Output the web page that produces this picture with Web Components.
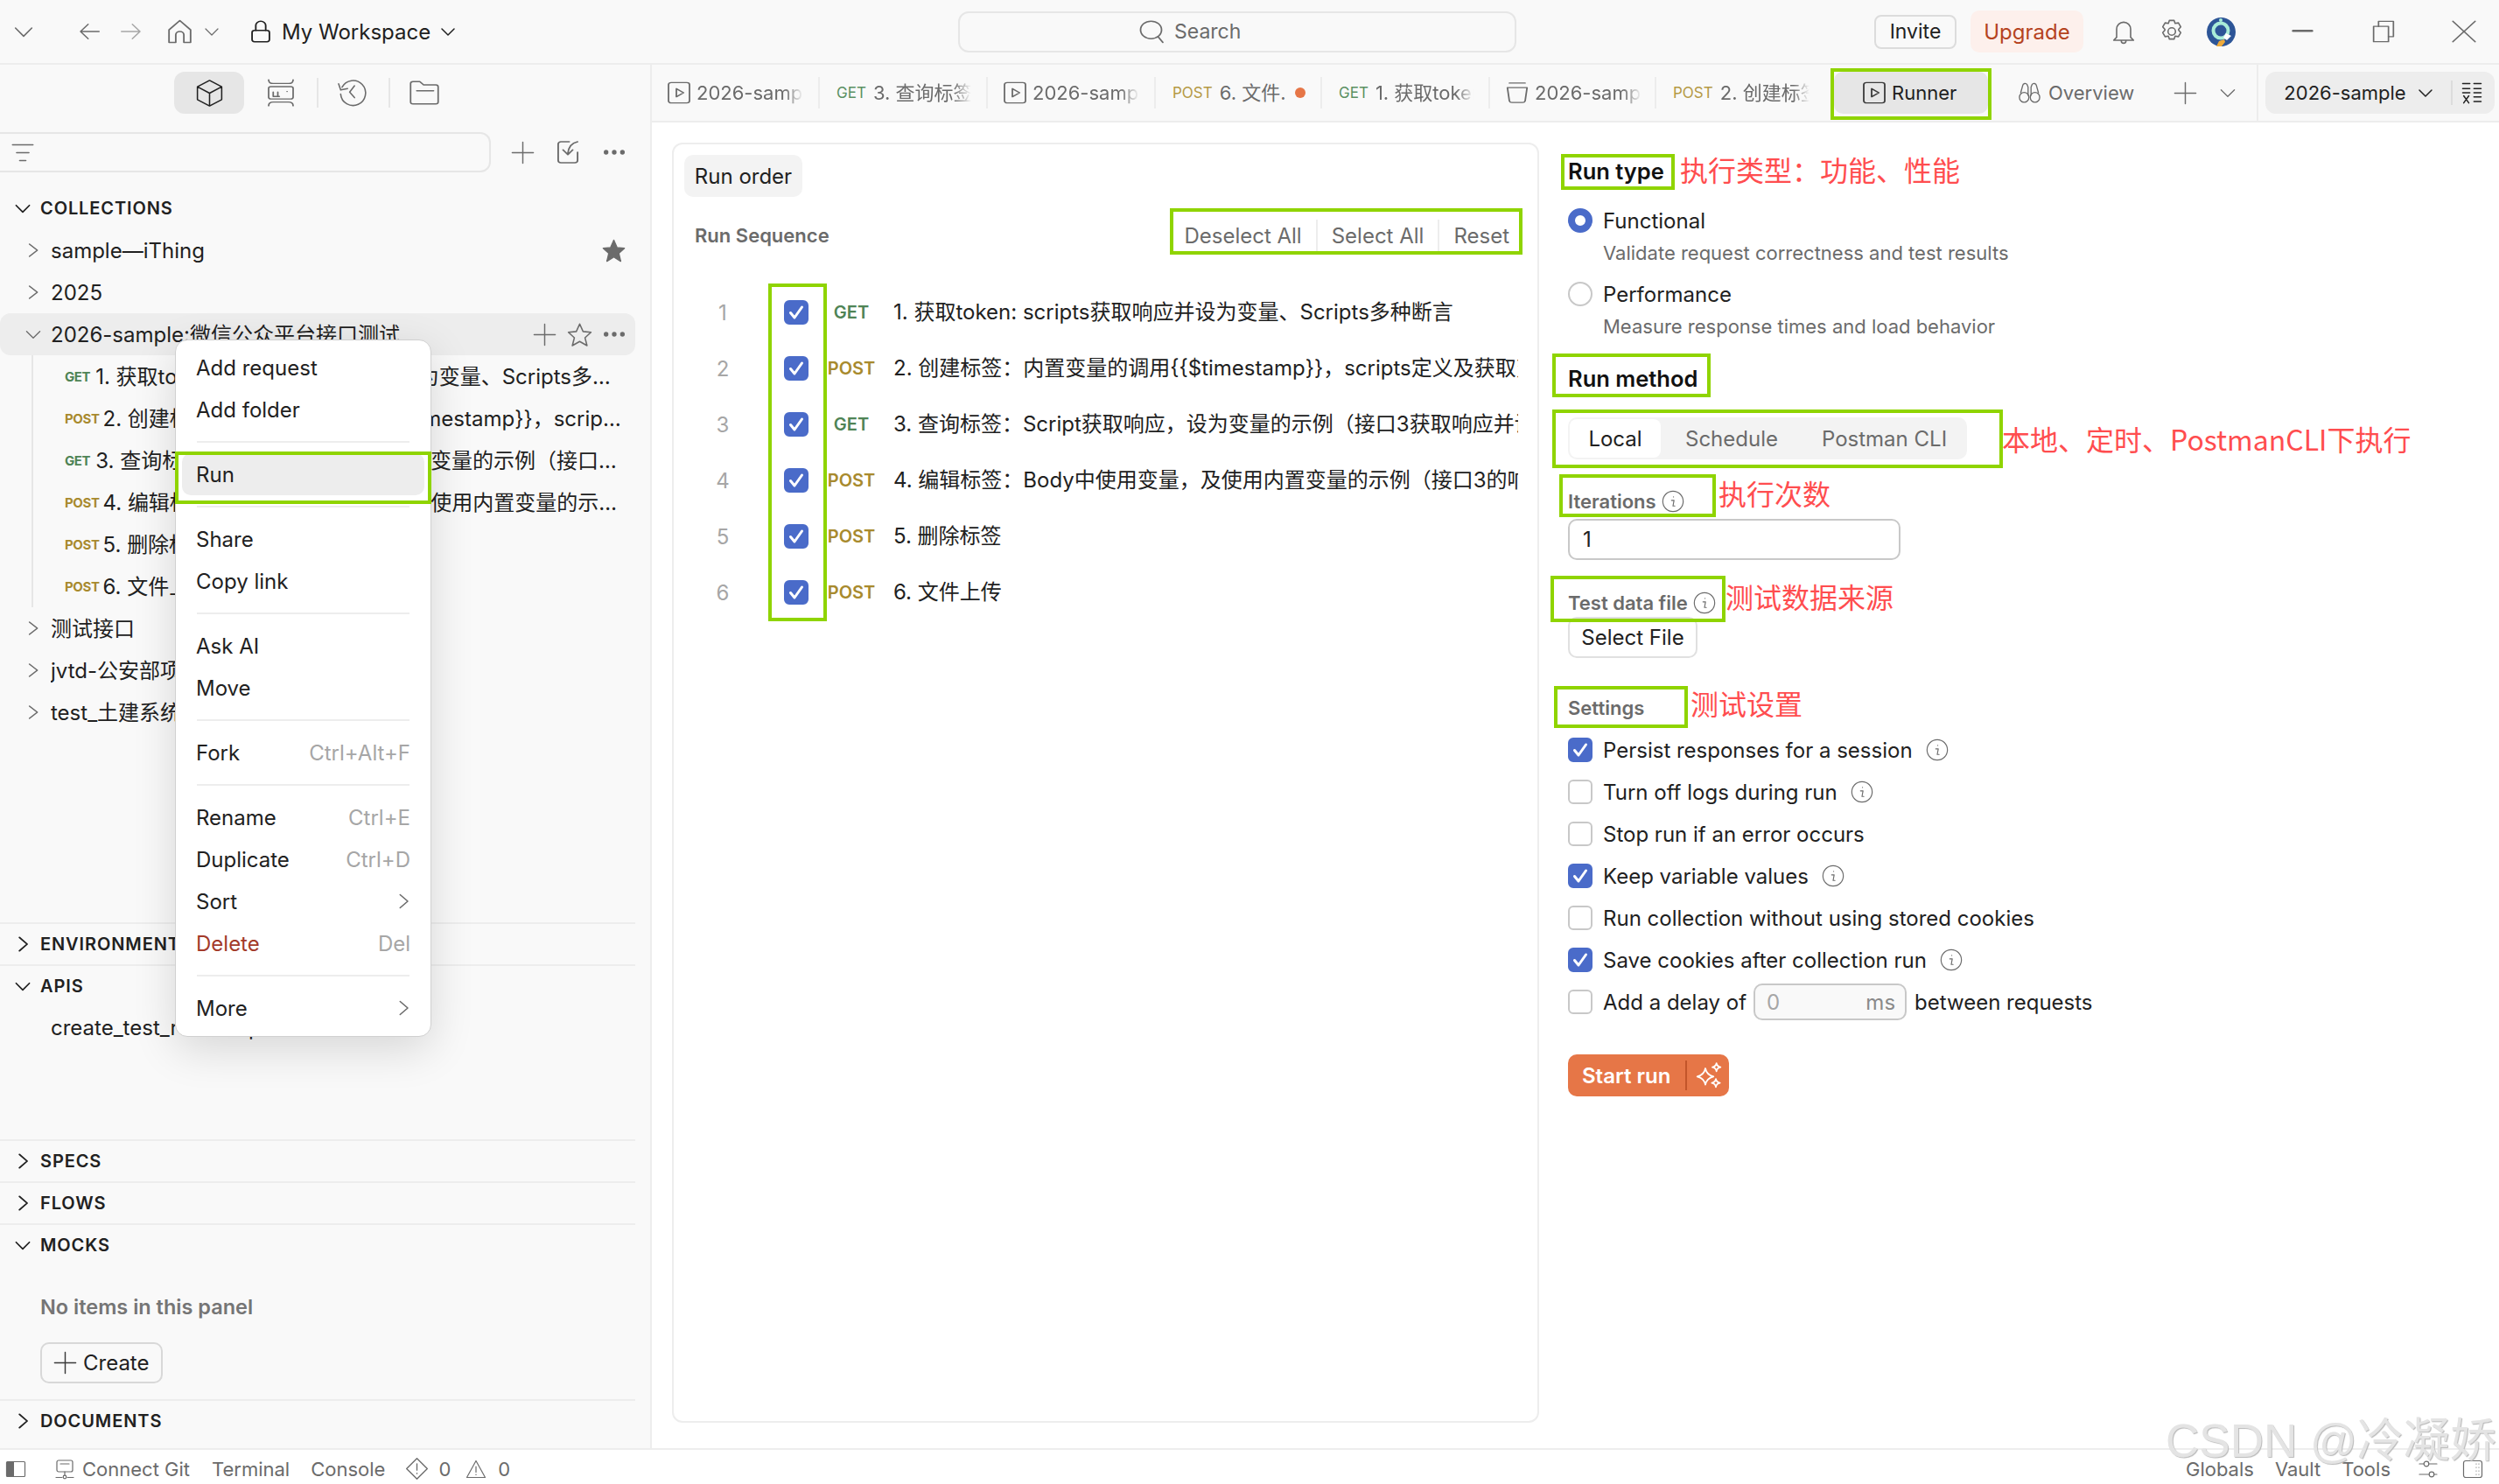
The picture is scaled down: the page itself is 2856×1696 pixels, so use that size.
<!DOCTYPE html>
<html lang="zh">
<head>
<meta charset="utf-8">
<title>Runner</title>
<style>
  html, body { margin: 0; padding: 0; height: 100%; background: #fff; }
  body { font-family: Inter, "Noto Sans CJK SC", sans-serif; font-size: 24px; color: #212121; overflow: hidden; }
</style>
</head>
<body>
<app-root></app-root>
<script>
const ICONS = {
  'chev-down': '<path d="M5 9l7 7 7-7"/>',
  'chev-right': '<path d="M9 5l7 7-7 7"/>',
  'arrow-left': '<path d="M11 5l-7 7 7 7M4 12h17"/>',
  'arrow-right': '<path d="M13 5l7 7-7 7M20 12H3"/>',
  home: '<path d="M4 22V10.500L12 2l8 8.500V22h-5v-7a3 3 0 0 0-6 0v7z"/>',
  lock: '<rect x="5" y="11" width="14" height="11" rx="2"/><path d="M8 11V6a4 4 0 0 1 8 0v5"/>',
  search: '<circle cx="11" cy="10.500" r="8"/><path d="M16.500 17l3.500 5"/>',
  bell: '<path d="M6 17v-7a6 6 0 0 1 12 0v7l2.500 2.500h-17zM10 20a2 2 0 0 0 4 0"/>',
  gear: '<circle cx="12" cy="12" r="3.200"/><path d="M10 2.500h4l.9 2.600 2.800-.5 2 3.400-1.800 2.100 0 .8 1.800 2.100-2 3.400-2.800-.5-.9 2.600h-4l-.9-2.600-2.800.5-2-3.400 1.800-2.100 0-.8-1.800-2.100 2-3.400 2.800.5z"/>',
  minimize: '<path d="M3 11h18" stroke-width="2"/>',
  restore: '<rect x="4" y="7" width="12" height="15"/><path d="M8 7V2h12v15h-4"/>',
  close: '<path d="M4 2l16 20M20 2L4 22"/>',
  cube: '<path d="M12 2l9 5v10l-9 5-9-5V7zM3 7l9 5 9-5M12 12v10"/>',
  apis: '<path d="M4 1.500c0 2 1 3 3 3h10c2 0 3-1 3-3M4 22.500c0-2 1-3 3-3h10c2 0 3 1 3 3"/><rect x="4" y="7" width="16" height="10" rx="1.500"/><path d="M7 11.500V15M10 11.500V15M7 15h4M16 11h.1" stroke-linecap="round"/>',
  history: '<path d="M5 8a9 9 0 1 1-1 5M2.500 5.500L4 10l5-1M14 7l-3.500 4.500 3.500 4"/>',
  folder: '<path d="M3 5a1.500 1.500 0 0 1 1.500-1.500H9l2.500 2.500h8A1.500 1.500 0 0 1 21 7.500V19a1.500 1.500 0 0 1-1.500 1.500h-15A1.500 1.500 0 0 1 3 19zM7 10.500h11"/>',
  filter: '<path d="M2 4h20M6 12h12M9 20h6"/>',
  plus: '<path d="M12 2v20M2 12h20"/>',
  import: '<path d="M13 3H7a2 2 0 0 0-2 2v14a2 2 0 0 0 2 2h10a2 2 0 0 0 2-2v-7M19 3c-4 1-6.500 4-7 10M8.500 10l3.500 4 3.500-4"/>',
  more: '<g fill="currentColor" stroke="none"><circle cx="5" cy="12" r="2"/><circle cx="12" cy="12" r="2"/><circle cx="19" cy="12" r="2"/></g>',
  'star-fill': '<path fill="currentColor" d="M12 2l3 7 7 .7-5.300 4.800L18.500 22 12 18l-6.500 4 1.800-7.500L2 9.700 9 9z"/>',
  star: '<path d="M12 2.500l3 6.700 7 .7-5.300 4.800 1.800 7L12 18l-6.500 3.700 1.800-7L2 9.900l7-.7z"/>',
  runner: '<rect x="4" y="2" width="16" height="20" rx="2"/><path d="M10 8v8l5.500-4z"/>',
  box: '<path d="M6 2.500h12M4.500 7h15L18 20a2 2 0 0 1-2 1.500H8A2 2 0 0 1 6 20z"/>',
  glasses: '<circle cx="6.500" cy="16.500" r="4.800"/><circle cx="17.500" cy="16.500" r="4.800"/><path d="M3 12l2-7a2.500 2.500 0 0 1 4.500-1l1 2.500v8M21 12l-2-7a2.500 2.500 0 0 0-4.500-1l-1 2.500v8"/>',
  vars: '<path d="M3 3h7M14 3h7M3 8h7M14 8h7M3 12h7M14 12h7M14 16h7M14 20.500h7M4 15l5 7M9 15l-5 7"/>',
  info: '<circle cx="12" cy="12" r="10"/><path d="M12.500 7.500v.2M10.500 11H13l-1 5.500h1.800"/>',
  git: '<rect x="3" y="2" width="18" height="13" rx="2"/><path d="M12 15v4M2 21.500h7M15 21.500h7M7 6h10"/><circle cx="12" cy="21" r="1.800"/>',
  'diamond-warn': '<path d="M12 1.500L22.500 12 12 22.500 1.500 12zM12 7v6.500M12 16.500v.5"/>',
  'tri-warn': '<path d="M12 2.500L22.500 21.500h-21zM12 9v6.500M12 18v.5"/>',
  'side-toggle': '<rect x="1.500" y="3.500" width="21" height="17" rx="1"/><rect x="2" y="4" width="8" height="16" fill="currentColor" stroke="none"/>',
  sliders: '<path d="M2 6h5M13 6h9M2 18h11M19 18h3"/><circle cx="10" cy="6" r="2.800"/><circle cx="16" cy="18" r="2.800"/>',
  'side-right': '<rect x="1.500" y="2.500" width="21" height="19" rx="2.500"/><path d="M16 6v.1M19 6v.1M16 10v.1M19 10v.1M16 14v.1M19 14v.1M16 18v.1M19 18v.1" stroke-linecap="round"/>',
  sparkle: '<path d="M9 6c.8 4 2.500 6 7 7-4.500 1-6.200 3-7 7-.8-4-2.500-6-7-7 4.500-1 6.200-3 7-7zM18.500 1.500c.3 2 1.200 3 3.500 3.500-2.300.5-3.200 1.500-3.500 3.500-.3-2-1.200-3-3.500-3.500 2.300-.5 3.200-1.500 3.500-3.500zM18 15c.3 2 1.200 3 3.500 3.500-2.300.5-3.200 1.500-3.500 3.500-.3-2-1.200-3-3.500-3.500 2.300-.5 3.200-1.500 3.500-3.500z"/>'
};

class AppIcon extends HTMLElement {
  connectedCallback() {
    const size = this.getAttribute('size') || 24;
    const h = this.getAttribute('h') || size;
    const sw = this.getAttribute('sw') || 1.200;
    const root = this.shadowRoot || this.attachShadow({ mode: 'open' });
    root.innerHTML = `
      <style>:host { display: inline-flex; flex: none; } svg { display: block; }</style>
      <svg width="${size}" height="${h}" viewBox="0 0 24 24" preserveAspectRatio="none" fill="none" stroke="currentColor"
        stroke-width="${sw}" stroke-linejoin="round" stroke-linecap="round">${ICONS[this.getAttribute('name')] || ''}</svg>`;
  }
}

// simple base so every element only has to give its css and markup
class ShadowEl extends HTMLElement {
  connectedCallback() {
    if (this.shadowRoot) return;
    this.attachShadow({ mode: 'open' }).innerHTML = `<style>${this.css()}</style>${this.html()}`;
  }
  css() { return ':host { display: block; }'; }
  html() { return '<slot></slot>'; }
  attr(name, fallback = '') { return this.hasAttribute(name) ? this.getAttribute(name) : fallback; }
}

class TopBar extends ShadowEl {
  css() {
    return `
      :host { display: flex; align-items: center; height: 72px; border-bottom: 2px solid #ededed; background: #f9f9f9; flex: none; }
      .left { width: 1095px; display: flex; align-items: center; color: #6b6b6b; flex: none; }
      .search { width: 638px; height: 47px; box-sizing: border-box; border: 2px solid #e6e6e6; border-radius: 12px; flex: none;
        display: flex; align-items: center; gap: 7px; padding-left: 202px; color: #6b6b6b; font-size: 23px; }
      .right { display: flex; align-items: center; color: #6b6b6b; }
      .ws { color: #212121; font-size: 24px; margin-left: 7px; }
      .invite { margin-left: 409px; width: 94px; height: 39px; box-sizing: border-box; border: 2px solid #dcdcdc; border-radius: 8px; color: #212121;
        display: flex; align-items: center; justify-content: center; font-size: 23px; }
      .upgrade { margin-left: 16px; width: 129px; height: 48px; border-radius: 10px; background: #fdf0ec; color: #b5431f;
        display: flex; align-items: center; justify-content: center; font-size: 24px; }
    `;
  }
  html() {
    return `
      <div class="left">
        <app-icon name="chev-down" size="32" style="margin-left:11px"></app-icon>
        <app-icon name="arrow-left" size="30" h="28" style="margin-left:44px"></app-icon>
        <app-icon name="arrow-right" size="30" h="28" style="margin-left:18px;color:#a6a6a6"></app-icon>
        <app-icon name="home" size="37" h="30" style="margin-left:22px"></app-icon>
        <app-icon name="chev-down" size="24" style="margin-left:6px"></app-icon>
        <app-icon name="lock" size="34" h="28" sw="1.300" style="margin-left:27px;color:#212121"></app-icon>
        <span class="ws">My Workspace</span>
        <app-icon name="chev-down" size="24" sw="1.500" style="margin-left:8px;color:#212121"></app-icon>
      </div>
      <div class="search"><app-icon name="search" size="36" h="30"></app-icon><span>Search</span></div>
      <div class="right">
        <div class="invite">Invite</div>
        <div class="upgrade">Upgrade</div>
        <app-icon name="bell" size="32" style="margin-left:30px"></app-icon>
        <app-icon name="gear" size="32" style="margin-left:23px"></app-icon>
        <svg width="33" height="33" viewBox="0 0 33 33" style="margin-left:24px">
          <circle cx="16.500" cy="16.500" r="16.500" fill="#2d5597"/>
          <circle cx="16" cy="15" r="8.500" fill="none" stroke="#a9ecd8" stroke-width="4"/>
          <path d="M22 18l6 3-5 5-4-3z" fill="#fff"/><path d="M11 33l3-6 6-2 1 3-4 5z" fill="#eeaa3c"/>
          <circle cx="16" cy="3" r="2" fill="#a9ecd8"/>
        </svg>
        <app-icon name="minimize" size="29" style="margin-left:62px"></app-icon>
        <app-icon name="restore" size="34" h="28" style="margin-left:61px"></app-icon>
        <app-icon name="close" size="38" h="28" style="margin-left:56px"></app-icon>
      </div>`;
  }
}

class ContextMenu extends ShadowEl {
  css() {
    return `
      :host { display: block; position: absolute; left: 200px; top: 314px; width: 293px; box-sizing: border-box; padding: 7px 0 8px;
        background: #fff; border: 1px solid #d0d0d0; border-radius: 14px; box-shadow: 0 14px 50px rgba(0,0,0,.14); font-size: 24px; z-index: 5; }
      .item { height: 48px; margin: 0 7px; padding: 0 16px; display: flex; align-items: center; justify-content: space-between; border-radius: 10px; color: #212121; }
      .item.on { background: #ededed; }
      .item.danger { color: #a33a2a; }
      .item small { font-size: 24px; color: #a6a6a6; }
      .item app-icon { color: #6b6b6b; margin-right: -7px; }
      .sep { height: 26px; display: flex; align-items: center; padding: 0 24px; }
      .sep i { display: block; height: 2px; flex: 1; background: #ededed; }
    `;
  }
  html() {
    const rows = [
      ['Add request'], ['Add folder'], null,
      ['Run', '', 'on'], null,
      ['Share'], ['Copy link'], null,
      ['Ask AI'], ['Move'], null,
      ['Fork', 'Ctrl+Alt+F'], null,
      ['Rename', 'Ctrl+E'], ['Duplicate', 'Ctrl+D'], ['Sort', '>'], ['Delete', 'Del', 'danger'], null,
      ['More', '>']
    ];
    return rows.map(r => {
      if (!r) return '<div class="sep"><i></i></div>';
      const tail = r[1] === '>' ? '<app-icon name="chev-right" size="30" h="26"></app-icon>' : r[1] ? `<small>${r[1]}</small>` : '';
      return `<div class="item ${r[2] || ''}"><span>${r[0]}</span>${tail}</div>`;
    }).join('');
  }
}

class SideSection extends ShadowEl {
  css() {
    return `
      :host { display: flex; align-items: center; height: 48px; box-sizing: border-box; flex: none; margin-right: 17px; }
      :host([line]) { border-top: 2px solid #ededed; }
      .c { width: 46px; padding-left: 6px; box-sizing: border-box; display: flex; justify-content: center; color: #212121; flex: none; }
      span { font-size: 20px; font-weight: 600; letter-spacing: .9px; color: #212121; white-space: nowrap; }
    `;
  }
  html() {
    const icon = this.hasAttribute('open')
      ? '<app-icon name="chev-down" size="26" sw="1.600"></app-icon>'
      : '<app-icon name="chev-right" size="30" h="26" sw="1.600"></app-icon>';
    return `<div class="c">${icon}</div><span><slot></slot></span>`;
  }
}

class TreeRow extends ShadowEl {
  css() {
    return `
      :host { display: flex; align-items: center; height: 48px; flex: none; margin-right: 17px; font-size: 24px; color: #212121; box-sizing: border-box; }
      :host([active]) { background: #ededed; border-radius: 12px; }
      .c { width: 58px; padding-left: 17px; box-sizing: border-box; display: flex; justify-content: center; color: #6b6b6b; flex: none; }
      .name { flex: 1; min-width: 0; white-space: nowrap; overflow: hidden; line-height: 32px; padding-top: 2px; }
      .tools { display: flex; align-items: center; color: #6b6b6b; padding-right: 8px; }
    `;
  }
  html() {
    let chev = '<div class="c"></div>';
    if (!this.hasAttribute('nochev')) {
      chev = this.hasAttribute('open')
        ? '<div class="c"><app-icon name="chev-down" size="26"></app-icon></div>'
        : '<div class="c"><app-icon name="chev-right" size="31" h="24"></app-icon></div>';
    }
    return `${chev}<span class="name"><slot></slot></span><span class="tools"><slot name="tools"></slot></span>`;
  }
}

class ReqRow extends ShadowEl {
  css() {
    return `
      :host { display: flex; align-items: center; height: 48px; margin-left: 36px; margin-right: 28px; padding-left: 36px; border-left: 2px solid #e6e6e6; box-sizing: border-box; font-size: 24px; color: #212121; }
      b { font-size: 15px; font-weight: 700; letter-spacing: -.4px; flex: none; margin-right: 6px; }
      b.GET { color: #4f8456; } b.POST { color: #a88a2e; margin-right: 4px; }
      span { white-space: nowrap; overflow: hidden; text-overflow: ellipsis; min-width: 0; line-height: 32px; padding-top: 2px; }
    `;
  }
  html() {
    const m = this.attr('method', 'GET');
    return `<b class="${m}">${m}</b><span><slot></slot></span>`;
  }
}

class SideBar extends ShadowEl {
  css() {
    return `
      :host { display: flex; flex-direction: column; position: relative; width: 745px; box-sizing: border-box; border-right: 2px solid #ededed; background: #f9f9f9; flex: none; }
      .tools { height: 64px; padding-top: 8px; box-sizing: border-box; display: flex; align-items: flex-start; flex: none; color: #6b6b6b; }
      .tile { width: 80px; height: 48px; margin-left: 199px; border-radius: 12px; background: #e6e6e6; display: flex; align-items: center; justify-content: center; color: #212121; }
      .tool { height: 48px; display: flex; align-items: center; }
      .div { width: 2px; height: 34px; background: #e6e6e6; margin-top: 7px; }
      .filter { display: flex; align-items: center; margin-top: 13px; flex: none; height: 46px; }
      .input { width: 561px; height: 46px; box-sizing: border-box; border: 2px solid #e6e6e6; border-left: 0; border-radius: 0 12px 12px 0; display: flex; align-items: center; padding-left: 12px; color: #6b6b6b; flex: none; }
      .filter > app-icon { color: #6b6b6b; }
      .gap { height: 17px; flex: none; }
      .spacer { height: 216px; flex: none; }
      .apispace { height: 104px; flex: none; }
      .empty { height: 153px; box-sizing: border-box; padding: 32px 0 0 46px; flex: none; margin-right: 17px; }
      .empty p { margin: 0; height: 32px; line-height: 32px; font-size: 23.500px; font-weight: 600; color: #757575; }
      .create { margin-top: 24px; width: 140px; height: 47px; box-sizing: border-box; border: 2px solid #d8d8d8; border-radius: 10px; display: flex; align-items: center; gap: 6px; padding-left: 12px; font-size: 24px; color: #212121; }
      .create app-icon { color: #3a3a3a; }
      .grow { flex: 1; }
    `;
  }
  html() {
    return `
      <div class="tools">
        <div class="tile"><app-icon name="cube" size="37" h="35" sw="1.000"></app-icon></div>
        <div class="tool" style="margin-left:21px"><app-icon name="apis" size="42" h="34" sw="1.000"></app-icon></div>
        <div class="div" style="margin-left:20px"></div>
        <div class="tool" style="margin-left:19px"><app-icon name="history" size="38" sw="1.000"></app-icon></div>
        <div class="div" style="margin-left:23px"></div>
        <div class="tool" style="margin-left:18px"><app-icon name="folder" size="42" h="36" sw="1.000"></app-icon></div>
      </div>
      <div class="filter">
        <div class="input"><app-icon name="filter" size="28" h="27" sw="1.400"></app-icon></div>
        <app-icon name="plus" size="29" style="margin-left:22px"></app-icon>
        <app-icon name="import" size="38" h="32" style="margin-left:18px"></app-icon>
        <app-icon name="more" size="32" style="margin-left:18px"></app-icon>
      </div>
      <div class="gap"></div>
      <side-section open>COLLECTIONS</side-section>
      <tree-row>sample—iThing<app-icon slot="tools" name="star-fill" size="29" style="margin-right:2px"></app-icon></tree-row>
      <tree-row>2025</tree-row>
      <tree-row open active>2026-sample:微信公众平台接口测试
        <app-icon slot="tools" name="plus" size="29"></app-icon>
        <app-icon slot="tools" name="star" size="31" style="margin-left:10px"></app-icon>
        <app-icon slot="tools" name="more" size="32" style="margin-left:8px"></app-icon>
      </tree-row>
      <req-row method="GET">1. 获取token: scripts获取响应并设为变量、Scripts多种断言</req-row>
      <req-row method="POST">2. 创建标签&#xFF1A;内置变量的调用{{$timestamp}}&#xFF0C;scripts定义及获取变量</req-row>
      <req-row method="GET">3. 查询标签&#xFF1A;Script获取响应&#xFF0C;设为变量的示例&#xFF08;接口3获取响应并设为变量&#xFF09;</req-row>
      <req-row method="POST">4. 编辑标签&#xFF1A;Body中使用变量&#xFF0C;及使用内置变量的示例&#xFF08;接口3的响应&#xFF09;</req-row>
      <req-row method="POST">5. 删除标签</req-row>
      <req-row method="POST">6. 文件上传</req-row>
      <tree-row>测试接口</tree-row>
      <tree-row>jvtd-公安部项目接口</tree-row>
      <tree-row>test_土建系统接口</tree-row>
      <div class="spacer"></div>
      <side-section line>ENVIRONMENTS</side-section>
      <side-section line open>APIS</side-section>
      <tree-row nochev>create_test_resultsapi</tree-row>
      <div class="apispace"></div>
      <side-section line>SPECS</side-section>
      <side-section line>FLOWS</side-section>
      <side-section line open>MOCKS</side-section>
      <div class="empty">
        <p>No items in this panel</p>
        <div class="create"><app-icon name="plus" size="29"></app-icon>Create</div>
      </div>
      <side-section line>DOCUMENTS</side-section>
      <div class="grow"></div>
      <context-menu></context-menu>`;
  }
}

class TabStrip extends ShadowEl {
  css() {
    return `
      :host { display: flex; align-items: center; height: 66px; box-sizing: border-box; border-bottom: 2px solid #ededed; background: #f9f9f9; font-size: 22px; color: #6b6b6b; flex: none; }
      .tab { display: flex; align-items: center; box-sizing: border-box; height: 36px; padding-left: 19px; gap: 8px; border-right: 2px solid #ededed; flex: none; overflow: hidden; white-space: nowrap; }
      .tab app-icon { margin: 0 -6px; }
      .tab span { display: block; overflow: hidden; line-height: 32px; -webkit-mask-image: linear-gradient(to right, #000 82%, transparent); mask-image: linear-gradient(to right, #000 82%, transparent); }
      .tab.dirty span { mask-image: none; -webkit-mask-image: none; }
      .tab b { font-size: 17px; font-weight: 400; flex: none; }
      b.GET { color: #5b9163; } b.POST { color: #b59a45; }
      .dot { width: 12px; height: 12px; border-radius: 50%; background: #e67647; flex: none; margin-left: 2px; }
      .runner { margin-left: 4px; width: 176px; height: 48px; border-radius: 10px; background: #e6e6e6; color: #212121; display: flex; align-items: center; gap: 8px; padding-left: 34px; box-sizing: border-box; flex: none; }
      .runner app-icon { color: #3a3a3a; margin: 0 -6px; }
      .over { display: flex; align-items: center; gap: 8px; margin-left: 34px; flex: none; }
      .env { margin-left: 8px; width: 262px; height: 48px; border-radius: 12px; background: #ededed; color: #212121; display: flex; align-items: center; box-sizing: border-box; padding-left: 21px; flex: none; }
      .vsep { width: 2px; height: 64px; background: #ededed; margin-left: 20px; flex: none; }
      .line { width: 2px; height: 28px; background: #dcdcdc; margin-left: 17px; }
    `;
  }
  html() {
    const tabs = [
      { w: 192, icon: 'runner', text: '2026-sample', tw: 122 },
      { w: 192, m: 'GET', text: '3. 查询标签', tw: 112 },
      { w: 192, icon: 'runner', text: '2026-sample', tw: 122 },
      { w: 190, m: 'POST', text: '6. 文件.', tw: 76, dirty: 1 },
      { w: 192, m: 'GET', text: '1. 获取token', tw: 112 },
      { w: 190, icon: 'box', text: '2026-sample', tw: 122 },
      { w: 199, m: 'POST', text: '2. 创建标签', tw: 102, last: 1 }
    ];
    const items = tabs.map(t => {
      const lead = t.icon ? `<app-icon name="${t.icon}" size="36" h="28"></app-icon>` : `<b class="${t.m}">${t.m}</b>`;
      return `<div class="tab ${t.dirty ? 'dirty' : ''}" style="width:${t.w}px;${t.last ? 'border-right:0' : ''}">${lead}<span style="width:${t.tw}px">${t.text}</span>${t.dirty ? '<i class="dot"></i>' : ''}</div>`;
    }).join('');
    return `${items}
      <div class="runner"><app-icon name="runner" size="36" h="28"></app-icon>Runner</div>
      <div class="over"><app-icon name="glasses" size="27" h="28"></app-icon>Overview</div>
      <app-icon name="plus" size="29" style="margin-left:44px"></app-icon>
      <app-icon name="chev-down" size="26" style="margin-left:21px"></app-icon>
      <div class="vsep"></div>
      <div class="env">2026-sample
        <app-icon name="chev-down" size="24" sw="1.500" style="margin-left:10px"></app-icon>
        <div class="line"></div>
        <app-icon name="vars" size="28" sw="1.300" style="margin-left:8px"></app-icon>
      </div>`;
  }
}

class SeqRow extends ShadowEl {
  css() {
    return `
      :host { display: flex; align-items: center; height: 64px; flex: none; font-size: 24px; color: #212121; }
      .n { width: 112px; text-align: center; color: #a6a6a6; flex: none; }
      check-box { margin-left: 14px; }
      b { width: 58px; margin-left: 20px; text-align: center; font-size: 20px; font-weight: 600; flex: none; }
      b.GET { color: #4f8456; } b.POST { color: #a88a2e; }
      .t { margin-left: 19px; width: 714px; overflow: hidden; white-space: nowrap; flex: none; line-height: 36px; }
    `;
  }
  html() {
    const m = this.attr('method');
    return `<span class="n">${this.attr('n')}</span><check-box checked></check-box><b class="${m}">${m}</b><span class="t"><slot></slot></span>`;
  }
}

class CheckBox extends ShadowEl {
  css() {
    return `
      :host { display: inline-flex; width: 28px; height: 28px; box-sizing: border-box; border-radius: 6px; border: 2px solid #c8c8c8; background: #fff; flex: none; align-items: center; justify-content: center; }
      :host([checked]) { background: #4a6bc9; border-color: #4a6bc9; }
      svg { display: block; }
    `;
  }
  html() {
    return this.hasAttribute('checked')
      ? '<svg width="20" height="20" viewBox="0 0 20 20" fill="none" stroke="#fff" stroke-width="3" stroke-linecap="round" stroke-linejoin="round"><path d="M3.500 10.500l4.500 5.500 8.500-12"/></svg>'
      : '';
  }
}

class RunOrder extends ShadowEl {
  css() {
    return `
      :host { display: block; width: 991px; height: 1463px; box-sizing: border-box; border: 2px solid #ededed; border-radius: 12px; flex: none; background: #fff; }
      .tab { margin: 12px 0 0 12px; width: 135px; height: 48px; border-radius: 10px; background: #f3f3f3; display: flex; align-items: center; justify-content: center; font-size: 24px; color: #212121; }
      .head { display: flex; align-items: center; height: 52px; margin-top: 18px; padding-left: 24px; }
      .head h4 { margin: 0; font-size: 22px; font-weight: 600; color: #6b6b6b; flex: 1; }
      .acts { display: flex; align-items: center; font-size: 24px; color: #6b6b6b; padding-right: 32px; }
      .acts i { width: 2px; height: 36px; background: #ededed; margin: 0 16px; }
      .rows { margin-top: 30px; display: flex; flex-direction: column; }
    `;
  }
  html() {
    return `
      <div class="tab">Run order</div>
      <div class="head">
        <h4>Run Sequence</h4>
        <div class="acts"><span>Deselect All</span><i></i><span>Select All</span><i></i><span>Reset</span></div>
      </div>
      <div class="rows">
        <seq-row n="1" method="GET">1. 获取token: scripts获取响应并设为变量、Scripts多种断言</seq-row>
        <seq-row n="2" method="POST">2. 创建标签&#xFF1A;内置变量的调用{{$timestamp}}&#xFF0C;scripts定义及获取变量的示例</seq-row>
        <seq-row n="3" method="GET">3. 查询标签&#xFF1A;Script获取响应&#xFF0C;设为变量的示例&#xFF08;接口3获取响应并设为变量&#xFF09;</seq-row>
        <seq-row n="4" method="POST">4. 编辑标签&#xFF1A;Body中使用变量&#xFF0C;及使用内置变量的示例&#xFF08;接口3的响应&#xFF09;</seq-row>
        <seq-row n="5" method="POST">5. 删除标签</seq-row>
        <seq-row n="6" method="POST">6. 文件上传</seq-row>
      </div>`;
  }
}

class RunSettings extends ShadowEl {
  css() {
    return `
      :host { display: flex; flex-direction: column; align-items: flex-start; margin-left: 33px; font-size: 24px; color: #212121; flex: none; width: 800px; }
      .title { height: 36px; line-height: 36px; font-size: 25.500px; font-weight: 600; color: #111; }
      .radio { display: flex; align-items: center; height: 36px; box-sizing: border-box; padding-bottom: 2px; gap: 12px; }
      .radio i { display: block; width: 28px; height: 28px; box-sizing: border-box; border-radius: 50%; border: 2px solid #c8c8c8; }
      .radio i.on { border: 8px solid #4a6bc9; }
      .desc { height: 36px; line-height: 36px; padding-left: 40px; font-size: 22px; color: #6b6b6b; }
      .seg { display: flex; align-items: center; width: 456px; height: 48px; box-sizing: border-box; background: #f3f3f3; border-radius: 10px; padding: 2px; color: #6b6b6b; }
      .seg .on { width: 104px; height: 44px; border-radius: 8px; background: #fff; color: #212121; display: flex; align-items: center; justify-content: center; }
      .label { height: 36px; display: flex; align-items: center; gap: 5px; font-size: 22px; font-weight: 600; color: #6b6b6b; }
      .input { width: 380px; height: 47px; box-sizing: border-box; border: 2px solid #c8c8c8; border-radius: 10px; padding-left: 15px; display: flex; align-items: center; }
      .btn { width: 148px; height: 47px; box-sizing: border-box; border: 2px solid #e0e0e0; border-radius: 10px; display: flex; align-items: center; justify-content: center; }
      .check { display: flex; align-items: center; height: 48px; }
      .check span { margin-left: 12px; white-space: nowrap; }
      .check app-icon { color: #6b6b6b; margin-left: 14px; }
      .delay { width: 175px; height: 42px; box-sizing: border-box; margin: 0 9px 0 8px; border: 2px solid #c8c8c8; border-radius: 10px; background: #f9f9f9; display: flex; align-items: center; justify-content: space-between; padding: 0 11px 0 13px; color: #a6a6a6; }
      .delay em { font-style: normal; color: #8a8a8a; }
      .start { margin-top: 36px; width: 184px; height: 48px; border-radius: 10px; background: #e67647; color: #fff; display: flex; align-items: center; font-weight: 600; font-size: 24px; padding-left: 16px; box-sizing: border-box; }
      .start i { width: 2px; height: 34px; background: #c2552a; margin: 0 9px 0 17px; }
    `;
  }
  html() {
    const info = '<app-icon name="info" size="28" sw="1.000"></app-icon>';
    const checks = [
      ['Persist responses for a session', 1, 1],
      ['Turn off logs during run', 0, 1],
      ['Stop run if an error occurs', 0, 0],
      ['Keep variable values', 1, 1],
      ['Run collection without using stored cookies', 0, 0],
      ['Save cookies after collection run', 1, 1]
    ].map(([t, on, i]) => `
      <div class="check"><check-box ${on ? 'checked' : ''}></check-box><span>${t}</span>${i ? info : ''}</div>`).join('');
    return `
      <div class="title" style="margin-top:38px">Run type</div>
      <div class="radio" style="margin-top:21px"><i class="on"></i>Functional</div>
      <div class="desc">Validate request correctness and test results</div>
      <div class="radio" style="margin-top:12px"><i></i>Performance</div>
      <div class="desc">Measure response times and load behavior</div>
      <div class="title" style="margin-top:24px">Run method</div>
      <div class="seg" style="margin-top:26px">
        <div class="on">Local</div><span style="margin-left:28px">Schedule</span><span style="margin-left:50px">Postman CLI</span>
      </div>
      <div class="label" style="margin-top:30px">Iterations ${info}</div>
      <div class="input" style="margin-top:2px">1</div>
      <div class="label" style="margin-top:31px">Test data file ${info}</div>
      <div class="btn" style="margin-top:-2px">Select File</div>
      <div class="label" style="margin-top:39px">Settings</div>
      <div style="margin-top:6px">${checks}
        <div class="check"><check-box></check-box><span>Add a delay of</span><div class="delay">0<em>ms</em></div>between requests</div>
      </div>
      <div class="start">Start run<i></i><app-icon name="sparkle" size="32" sw="1.300"></app-icon></div>`;
  }
}

class StatusBar extends ShadowEl {
  css() {
    return `
      :host { display: flex; align-items: center; height: 41px; box-sizing: border-box; padding-top: 4px; border-top: 2px solid #ededed; background: #fff; font-size: 22px; color: #6b6b6b; flex: none; }
      span { white-space: nowrap; }
      .push { flex: 1; }
    `;
  }
  html() {
    return `
      <app-icon name="side-toggle" size="24" style="margin-left:6px"></app-icon>
      <app-icon name="git" size="24" style="margin-left:32px"></app-icon>
      <span style="margin-left:8px">Connect Git</span>
      <span style="margin-left:25px">Terminal</span>
      <span style="margin-left:24px">Console</span>
      <app-icon name="diamond-warn" size="27" style="margin-left:23px"></app-icon>
      <span style="margin-left:11px">0</span>
      <app-icon name="tri-warn" size="24" style="margin-left:17px"></app-icon>
      <span style="margin-left:13px">0</span>
      <div class="push"></div>
      <span>Globals</span>
      <span style="margin-left:24px">Vault</span>
      <span style="margin-left:24px">Tools</span>
      <app-icon name="sliders" size="24" style="margin-left:31px"></app-icon>
      <app-icon name="side-right" size="24" style="margin:0 18px 0 27px"></app-icon>`;
  }
}

// the green boxes and the red notes that were painted over the screenshot
class NoteLayer extends ShadowEl {
  css() {
    return `
      :host { display: block; position: absolute; inset: 0; pointer-events: none; z-index: 10; font-family: "Noto Sans CJK SC", sans-serif; }
      .box { position: absolute; box-sizing: border-box; border: 4px solid #8fd400; }
      .note { position: absolute; height: 44px; line-height: 44px; font-size: 32px; color: #ff4d4f; white-space: nowrap; }
      .mark { position: absolute; left: 2475px; top: 1612px; font-family: "Liberation Sans", "Noto Sans CJK SC", sans-serif; font-size: 53px; line-height: 70px; color: #e4e4e4; text-shadow: 1px 1px 1px #b8b8b8; white-space: nowrap; }
    `;
  }
  html() {
    const boxes = [
      [1337, 238, 1740, 291], [878, 324, 945, 710], [2092, 78, 2276, 137], [1784, 176, 1914, 217],
      [1774, 404, 1955, 454], [1774, 468, 2289, 535], [1782, 542, 1961, 591], [1772, 658, 1972, 711],
      [1776, 784, 1929, 832], [200, 516, 493, 576]
    ].map(([a, b, c, d]) => `<div class="box" style="left:${a}px;top:${b}px;width:${c - a}px;height:${d - b}px"></div>`).join('');
    const notes = [
      [1920, 193, '执行类型&#xFF1A;功能、性能'], [2288, 501, '本地、定时、PostmanCLI下执行'], [1964, 563, '执行次数'],
      [1972, 681, '测试数据来源'], [1932, 803, '测试设置']
    ].map(([x, y, t]) => `<div class="note" style="left:${x}px;top:${y - 22}px">${t}</div>`).join('');
    return `${boxes}${notes}<div class="mark">CSDN @冷凝娇</div>`;
  }
}

class AppRoot extends ShadowEl {
  css() {
    return `
      :host { display: flex; flex-direction: column; position: relative; width: 2856px; height: 1696px; overflow: hidden; }
      .body { display: flex; flex: 1; min-height: 0; }
      .main { flex: 1; display: flex; flex-direction: column; min-width: 0; }
      .work { display: flex; flex: 1; padding: 23px 0 0 23px; align-items: flex-start; min-height: 0; }
      .pane { display: flex; margin-top: -23px; }
    `;
  }
  html() {
    return `
      <top-bar></top-bar>
      <div class="body">
        <side-bar></side-bar>
        <div class="main">
          <tab-strip></tab-strip>
          <div class="work">
            <run-order></run-order>
            <div class="pane"><run-settings></run-settings></div>
          </div>
        </div>
      </div>
      <status-bar></status-bar>
      <note-layer></note-layer>`;
  }
}

customElements.define('app-icon', AppIcon);
customElements.define('check-box', CheckBox);
customElements.define('top-bar', TopBar);
customElements.define('context-menu', ContextMenu);
customElements.define('side-section', SideSection);
customElements.define('tree-row', TreeRow);
customElements.define('req-row', ReqRow);
customElements.define('side-bar', SideBar);
customElements.define('tab-strip', TabStrip);
customElements.define('seq-row', SeqRow);
customElements.define('run-order', RunOrder);
customElements.define('run-settings', RunSettings);
customElements.define('status-bar', StatusBar);
customElements.define('note-layer', NoteLayer);
customElements.define('app-root', AppRoot);
</script>
</body>
</html>
